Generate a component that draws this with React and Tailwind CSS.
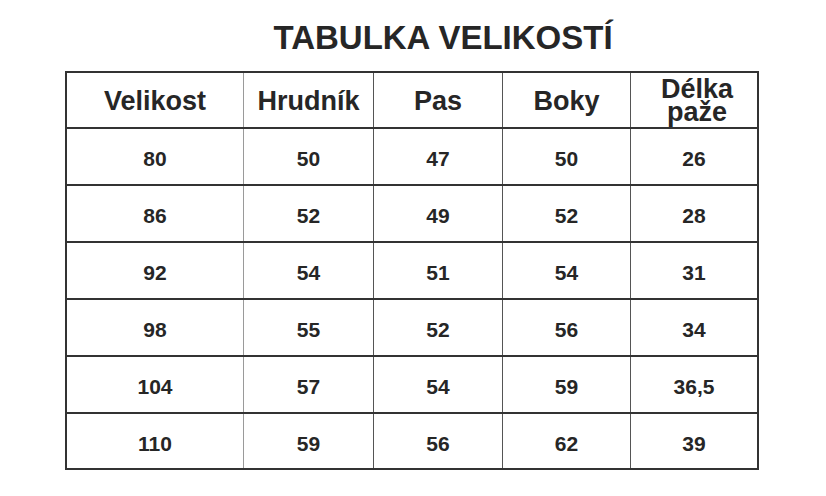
// Size chart (tabulka velikostí): title + bordered grid of measurements.
const rows = [
  ["80", "50", "47", "50", "26"],
  ["86", "52", "49", "52", "28"],
  ["92", "54", "51", "54", "31"],
  ["98", "55", "52", "56", "34"],
  ["104", "57", "54", "59", "36,5"],
  ["110", "59", "56", "62", "39"],
];

const colClass = [
  "w-[176px]",
  "w-[130px] border-l border-[#9a9a9a]",
  "w-[129px] border-l border-[#555]",
  "w-[128px] border-l border-[#555]",
  "w-[127px] border-l border-[#555]",
];

export default function App() {
  return (
    <div className="w-[826px] h-[496px] bg-white text-[#262626] font-[family-name:Liberation_Sans,Arial,sans-serif] font-bold">
      <div className="flex justify-center pl-[60px] pt-[20px] h-[71px]">
        <h1 className="text-[33px] leading-[36px]">TABULKA VELIKOSTÍ</h1>
      </div>
      <div className="ml-[65px] w-[694px] border-2 border-[#333]">
        <div className="flex h-[56px] border-b-2 border-[#333]">
          {["Velikost", "Hrudník", "Pas", "Boky"].map((h, i) => (
            <div
              key={h}
              className={`${colClass[i]} flex items-center justify-center text-[27px] pt-[3px]`}
            >
              {h}
            </div>
          ))}
          <div
            className={`${colClass[4]} flex items-center justify-center text-center text-[27px] leading-[23px] pl-[6px] pt-[2px]`}
          >
            Délka
            <br />
            paže
          </div>
        </div>
        {rows.map((r, ri) => (
          <div
            key={r[0]}
            className={
              ri === rows.length - 1
                ? "flex h-[54px]"
                : "flex h-[57px] border-b-2 border-[#333]"
            }
          >
            {r.map((v, ci) => (
              <div
                key={ci}
                className={`${colClass[ci]} flex items-center justify-center text-[21px] pt-[5px]`}
              >
                {v}
              </div>
            ))}
          </div>
        ))}
      </div>
    </div>
  );
}
